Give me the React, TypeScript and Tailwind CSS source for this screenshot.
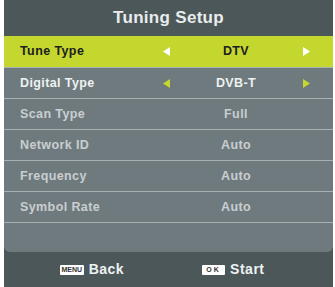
const rows = [
  { label: "Tune Type", value: "DTV", arrows: true, active: true },
  { label: "Digital Type", value: "DVB-T", arrows: true },
  { label: "Scan Type", value: "Full" },
  { label: "Network ID", value: "Auto" },
  { label: "Frequency", value: "Auto" },
  { label: "Symbol Rate", value: "Auto" },
];

function Tri({ dir, color }: { dir: "l" | "r"; color: string }) {
  return (
    <svg width="7" height="9" viewBox="0 0 7 9">
      <path d={dir === "l" ? "M7 0 L0 4.5 L7 9 Z" : "M0 0 L7 4.5 L0 9 Z"} fill={color} />
    </svg>
  );
}

export default function App() {
  return (
    <div
      className="w-[335px] h-[287px] bg-white overflow-hidden"
      style={{ fontFamily: '"Liberation Sans", Arial, sans-serif' }}
    >
      <div className="ml-[4px] w-[329px] h-[287px] flex flex-col bg-[#4c575a]">
        <div className="h-[36px] flex items-center justify-center text-[17px] font-bold text-[#e8ecec] tracking-[0.3px]">
          Tuning Setup
        </div>
        <div className="bg-[#6f7a7e] rounded-b-[6px]">
          {rows.map((r, i) => (
            <div
              key={r.label}
              className={`h-[31px] flex items-center text-[12.5px] font-bold tracking-[0.4px] ${
                i > 0 ? "border-t border-[#a8b1b4]" : ""
              } ${r.active ? "bg-[#c4d72e] text-[#1c2020]" : i === 1 ? "text-[#eef1f1]" : "text-[#c9ced0]"}`}
            >
              <div className="w-[156px] pl-[16px]">{r.label}</div>
              <div className="w-[12px] flex justify-center">
                {r.arrows && <Tri dir="l" color={r.active ? "#ffffff" : "#c4d72e"} />}
              </div>
              <div className="w-[128px] text-center">{r.value}</div>
              <div className="w-[12px] flex justify-center">
                {r.arrows && <Tri dir="r" color={r.active ? "#ffffff" : "#c4d72e"} />}
              </div>
            </div>
          ))}
          <div className="h-[30px] border-t border-[#a8b1b4]" />
        </div>
        <div className="flex-1 flex items-center text-[14px] font-bold text-[#eef1f1] tracking-[0.5px]">
          <div className="flex items-center ml-[56px]">
            <span className="bg-white text-[#333] text-[7px] font-bold px-[1.5px] h-[10px] leading-[10px] rounded-[1px] tracking-normal">
              MENU
            </span>
            <span className="ml-[5px]">Back</span>
          </div>
          <div className="flex items-center ml-[78px]">
            <span className="bg-white text-[#333] text-[7px] font-bold w-[23px] h-[10px] leading-[10px] rounded-[1px] text-center tracking-[2px]">
              OK
            </span>
            <span className="ml-[5px]">Start</span>
          </div>
        </div>
      </div>
    </div>
  );
}
